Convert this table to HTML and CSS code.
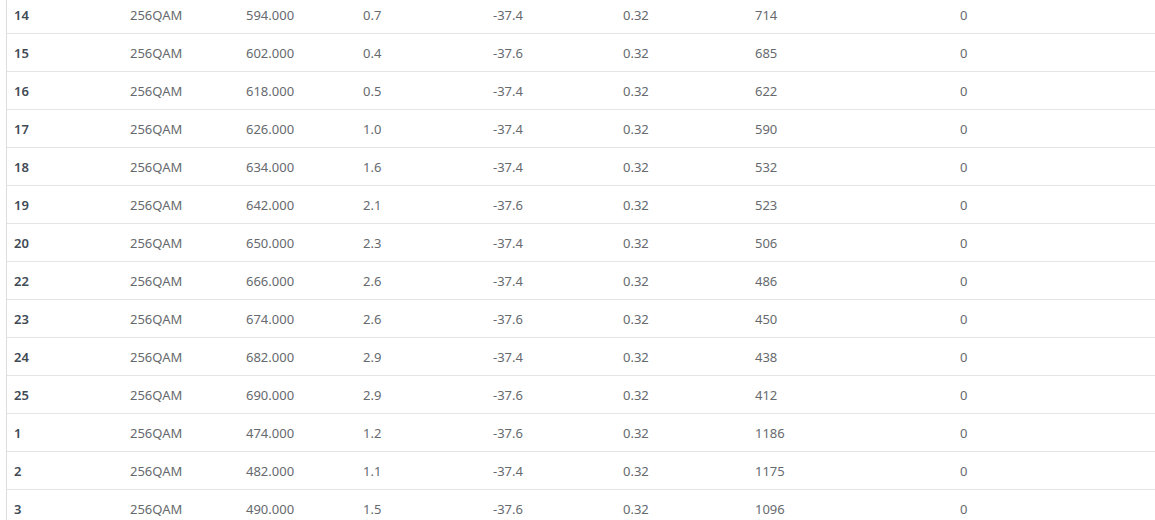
FILE: index.html
```html
<!DOCTYPE html>
<html>
<head>
<meta charset="utf-8">
<link rel="stylesheet" href="styles.css">
</head>
<body>
<div class="wrap">
<table class="grid">
<colgroup>
<col class="c1"><col class="c2"><col class="c3"><col class="c4"><col class="c5"><col class="c6"><col class="c7"><col class="c8">
</colgroup>
<tbody>
<tr><th>14</th><td>256QAM</td><td>594.000</td><td>0.7</td><td>-37.4</td><td>0.32</td><td>714</td><td>0</td></tr>
<tr><th>15</th><td>256QAM</td><td>602.000</td><td>0.4</td><td>-37.6</td><td>0.32</td><td>685</td><td>0</td></tr>
<tr><th>16</th><td>256QAM</td><td>618.000</td><td>0.5</td><td>-37.4</td><td>0.32</td><td>622</td><td>0</td></tr>
<tr><th>17</th><td>256QAM</td><td>626.000</td><td>1.0</td><td>-37.4</td><td>0.32</td><td>590</td><td>0</td></tr>
<tr><th>18</th><td>256QAM</td><td>634.000</td><td>1.6</td><td>-37.4</td><td>0.32</td><td>532</td><td>0</td></tr>
<tr><th>19</th><td>256QAM</td><td>642.000</td><td>2.1</td><td>-37.6</td><td>0.32</td><td>523</td><td>0</td></tr>
<tr><th>20</th><td>256QAM</td><td>650.000</td><td>2.3</td><td>-37.4</td><td>0.32</td><td>506</td><td>0</td></tr>
<tr><th>22</th><td>256QAM</td><td>666.000</td><td>2.6</td><td>-37.4</td><td>0.32</td><td>486</td><td>0</td></tr>
<tr><th>23</th><td>256QAM</td><td>674.000</td><td>2.6</td><td>-37.6</td><td>0.32</td><td>450</td><td>0</td></tr>
<tr><th>24</th><td>256QAM</td><td>682.000</td><td>2.9</td><td>-37.4</td><td>0.32</td><td>438</td><td>0</td></tr>
<tr><th>25</th><td>256QAM</td><td>690.000</td><td>2.9</td><td>-37.6</td><td>0.32</td><td>412</td><td>0</td></tr>
<tr><th>1</th><td>256QAM</td><td>474.000</td><td>1.2</td><td>-37.6</td><td>0.32</td><td>1186</td><td>0</td></tr>
<tr><th>2</th><td>256QAM</td><td>482.000</td><td>1.1</td><td>-37.4</td><td>0.32</td><td>1175</td><td>0</td></tr>
<tr><th>3</th><td>256QAM</td><td>490.000</td><td>1.5</td><td>-37.6</td><td>0.32</td><td>1096</td><td>0</td></tr>
</tbody>
</table>
</div>
</body>
</html>
```
FILE: styles.css
```css
html, body {
  margin: 0;
  padding: 0;
  background: #ffffff;
  overflow: hidden;
}
.wrap {
  margin: -4px 0 0 6px;
  border-left: 1px solid #dddddd;
}
.grid {
  border-collapse: collapse;
  table-layout: fixed;
  width: 1149px;
  font-family: "Noto Sans", "Liberation Sans", sans-serif;
  font-size: 13px;
}
.c1 { width: 116px; }
.c2 { width: 116px; }
.c3 { width: 117px; }
.c4 { width: 130px; }
.c5 { width: 130px; }
.c6 { width: 132px; }
.c7 { width: 205px; }
.c8 { width: 203px; }
.grid th, .grid td {
  height: 37px;
  padding: 0 7px;
  text-align: left;
  vertical-align: middle;
  border-bottom: 1px solid #e4e4e4;
  white-space: nowrap;
}
.grid th {
  font-weight: 600;
  color: #3f4a55;
}
.grid td {
  font-weight: 400;
  color: #666a6e;
}
```
